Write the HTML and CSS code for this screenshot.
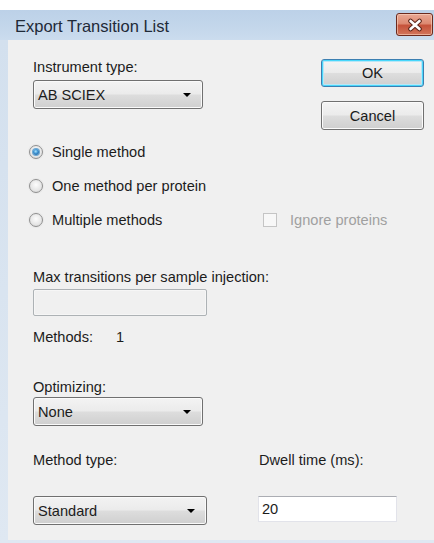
FILE: index.html
```html
<!DOCTYPE html>
<html lang="en">
<head>
<meta charset="utf-8">
<title>Export Transition List</title>
<link rel="stylesheet" href="styles.css">
</head>
<body>
<div class="window">
  <div class="titlebar">
    <span class="title">Export Transition List</span>
    <div class="close-btn" aria-label="Close">
      <svg width="18" height="14" viewBox="0 0 18 14">
        <path d="M4.5 3 L13.5 11 M13.5 3 L4.5 11" stroke="#5a2418" stroke-width="4.6" stroke-linecap="round" fill="none"/>
        <path d="M4.5 3 L13.5 11 M13.5 3 L4.5 11" stroke="#ffffff" stroke-width="2.6" stroke-linecap="round" fill="none"/>
      </svg>
    </div>
  </div>
  <div class="frame">
    <div class="client">
      <div class="top-row">
        <div class="field">
          <div class="label">Instrument type:</div>
          <div class="combo combo-instrument"><span>AB SCIEX</span><i class="arrow"></i></div>
        </div>
        <div class="buttons">
          <div class="btn btn-default">OK</div>
          <div class="btn">Cancel</div>
        </div>
      </div>

      <div class="radios">
        <div class="radio-row">
          <span class="radio checked"></span><span class="radio-text">Single method</span>
        </div>
        <div class="radio-row">
          <span class="radio"></span><span class="radio-text">One method per protein</span>
        </div>
        <div class="radio-row">
          <span class="radio"></span><span class="radio-text radio-text-wide">Multiple methods</span>
          <span class="checkbox"></span><span class="disabled-text">Ignore proteins</span>
        </div>
      </div>

      <div class="field field-max">
        <div class="label">Max transitions per sample injection:</div>
        <div class="textbox textbox-disabled"></div>
      </div>

      <div class="methods-count">
        <span class="methods-label">Methods:</span><span>1</span>
      </div>

      <div class="field field-optimizing">
        <div class="label">Optimizing:</div>
        <div class="combo combo-optimizing"><span>None</span><i class="arrow"></i></div>
      </div>

      <div class="bottom-row">
        <div class="field">
          <div class="label">Method type:</div>
          <div class="combo combo-method"><span>Standard</span><i class="arrow"></i></div>
        </div>
        <div class="field field-dwell">
          <div class="label">Dwell time (ms):</div>
          <div class="textbox textbox-dwell">20</div>
        </div>
      </div>
    </div>
  </div>
</div>
</body>
</html>
```

FILE: styles.css
```css
html, body {
  margin: 0;
  padding: 0;
  background: #ffffff;
}

body {
  font-family: "Liberation Sans", Arial, sans-serif;
  font-size: 14.6px;
  color: #1c1c1c;
  width: 434px;
  height: 543px;
  overflow: hidden;
}

.window {
  margin-top: 10px;
  height: 533px;
  display: flex;
  flex-direction: column;
  background: #d3e0ee;
}

/* caption strip */
.titlebar {
  height: 30px;
  flex: none;
  display: flex;
  align-items: flex-start;
  justify-content: space-between;
  background: linear-gradient(to bottom, #bcd1e8 0%, #c4d7eb 60%, #cbdcee 100%);
}

.title {
  font-size: 16.5px;
  color: #1f2a38;
  padding: 7px 0 0 15px;
  line-height: 18px;
}

.close-btn {
  width: 37px;
  height: 23px;
  margin: 3px 1px 0 0;
  box-sizing: border-box;
  border: 1px solid #6b2a1e;
  border-radius: 3px;
  background: linear-gradient(to bottom, #e9a894 0%, #dd8a72 45%, #c5523a 55%, #d2765c 100%);
  box-shadow: inset 0 0 0 1px rgba(255, 220, 200, 0.55);
  display: flex;
  align-items: center;
  justify-content: center;
}

/* side and bottom border around the client area */
.frame {
  flex: 1;
  padding: 0 0 3px 8px;
  display: flex;
  background: linear-gradient(to bottom, #d3e0ee 0%, #dfe8f2 100%);
}

.client {
  flex: 1;
  background: #f0f0f0;
  padding: 18px 10px 0 25px;
  display: flex;
  flex-direction: column;
}

.label {
  height: 18px;
  line-height: 18px;
  white-space: nowrap;
}

.top-row {
  display: flex;
  justify-content: space-between;
}

.buttons {
  display: flex;
  flex-direction: column;
  gap: 14px;
  padding-top: 1px;
}

.btn {
  width: 103px;
  height: 29px;
  box-sizing: border-box;
  border: 1px solid #707070;
  border-radius: 3px;
  background: linear-gradient(to bottom, #f4f4f4 0%, #ebebeb 48%, #dddddd 52%, #cfcfcf 100%);
  box-shadow: inset 0 0 0 1px #fbfbfb;
  display: flex;
  align-items: center;
  justify-content: center;
  color: #1a1a1a;
}

.btn-default {
  height: 28px;
  border-color: #3c7fb1;
  box-shadow: inset 0 0 0 1px #48d7fb, inset 0 0 0 2px #b9e6f6;
}

.combo {
  margin-top: 4px;
  height: 29px;
  box-sizing: border-box;
  border: 1px solid #707070;
  border-radius: 3px;
  background: linear-gradient(to bottom, #f3f3f3 0%, #ebebeb 48%, #dddddd 52%, #cfcfcf 100%);
  box-shadow: inset 0 0 0 1px #fafafa;
  display: flex;
  align-items: center;
  justify-content: space-between;
  padding: 0 11px 0 4px;
}

.combo-instrument { width: 170px; }
.combo-optimizing { width: 170px; margin-top: 1px; }
.combo-method { width: 174px; margin-top: 27px; }

.arrow {
  width: 0;
  height: 0;
  border-left: 4px solid transparent;
  border-right: 4px solid transparent;
  border-top: 4px solid #000000;
  margin-top: 1px;
}

/* option buttons */
.radios {
  margin-top: 5px;
  margin-left: -4px;
  display: flex;
  flex-direction: column;
}

.radio-row {
  height: 34px;
  display: flex;
  align-items: center;
}

.radio {
  width: 14px;
  height: 14px;
  box-sizing: border-box;
  border-radius: 50%;
  border: 1px solid #8f8f8f;
  background: radial-gradient(circle at 50% 40%, #fdfdfd 0%, #e4e4e4 65%, #c9c9c9 100%);
  box-shadow: 0 0 0 1px #e8e8e8;
  position: relative;
  flex: none;
}

.radio.checked::after {
  content: "";
  position: absolute;
  left: 3px;
  top: 3px;
  width: 6px;
  height: 6px;
  border-radius: 50%;
  background: radial-gradient(circle at 45% 40%, #a7e2fc 0%, #3a8fcf 45%, #1b4f86 100%);
  box-shadow: 0 0 0 1px #6aa7d3;
}

.radio-text {
  margin-left: 9px;
}

.radio-text-wide {
  width: 211px;
}

.checkbox {
  width: 14px;
  height: 14px;
  box-sizing: border-box;
  border: 1px solid #c4c4c4;
  background: #f7f7f7;
  flex: none;
}

.disabled-text {
  margin-left: 13px;
  color: #a0a0a0;
}

.field-max {
  margin-top: 31px;
}

.textbox {
  margin-top: 3px;
  height: 27px;
  box-sizing: border-box;
  display: flex;
  align-items: center;
  padding-left: 3px;
}

.textbox-disabled {
  width: 174px;
  border: 1px solid #adb2b5;
  border-radius: 2px;
  background: #f0f0f0;
  box-shadow: inset 0 0 0 1px #f6f6f6;
}

.methods-count {
  margin-top: 12px;
  height: 18px;
  line-height: 18px;
  display: flex;
}

.methods-label {
  width: 83px;
}

.field-optimizing {
  margin-top: 32px;
}

.bottom-row {
  margin-top: 25px;
  display: flex;
}

.field-dwell {
  margin-left: 51px;
}

.field-dwell .label {
  padding-left: 1px;
}

.textbox-dwell {
  width: 139px;
  height: 26px;
  margin-top: 27px;
  background: #ffffff;
  border: 1px solid #e2e3ea;
  border-top-color: #abadb3;
}
```
